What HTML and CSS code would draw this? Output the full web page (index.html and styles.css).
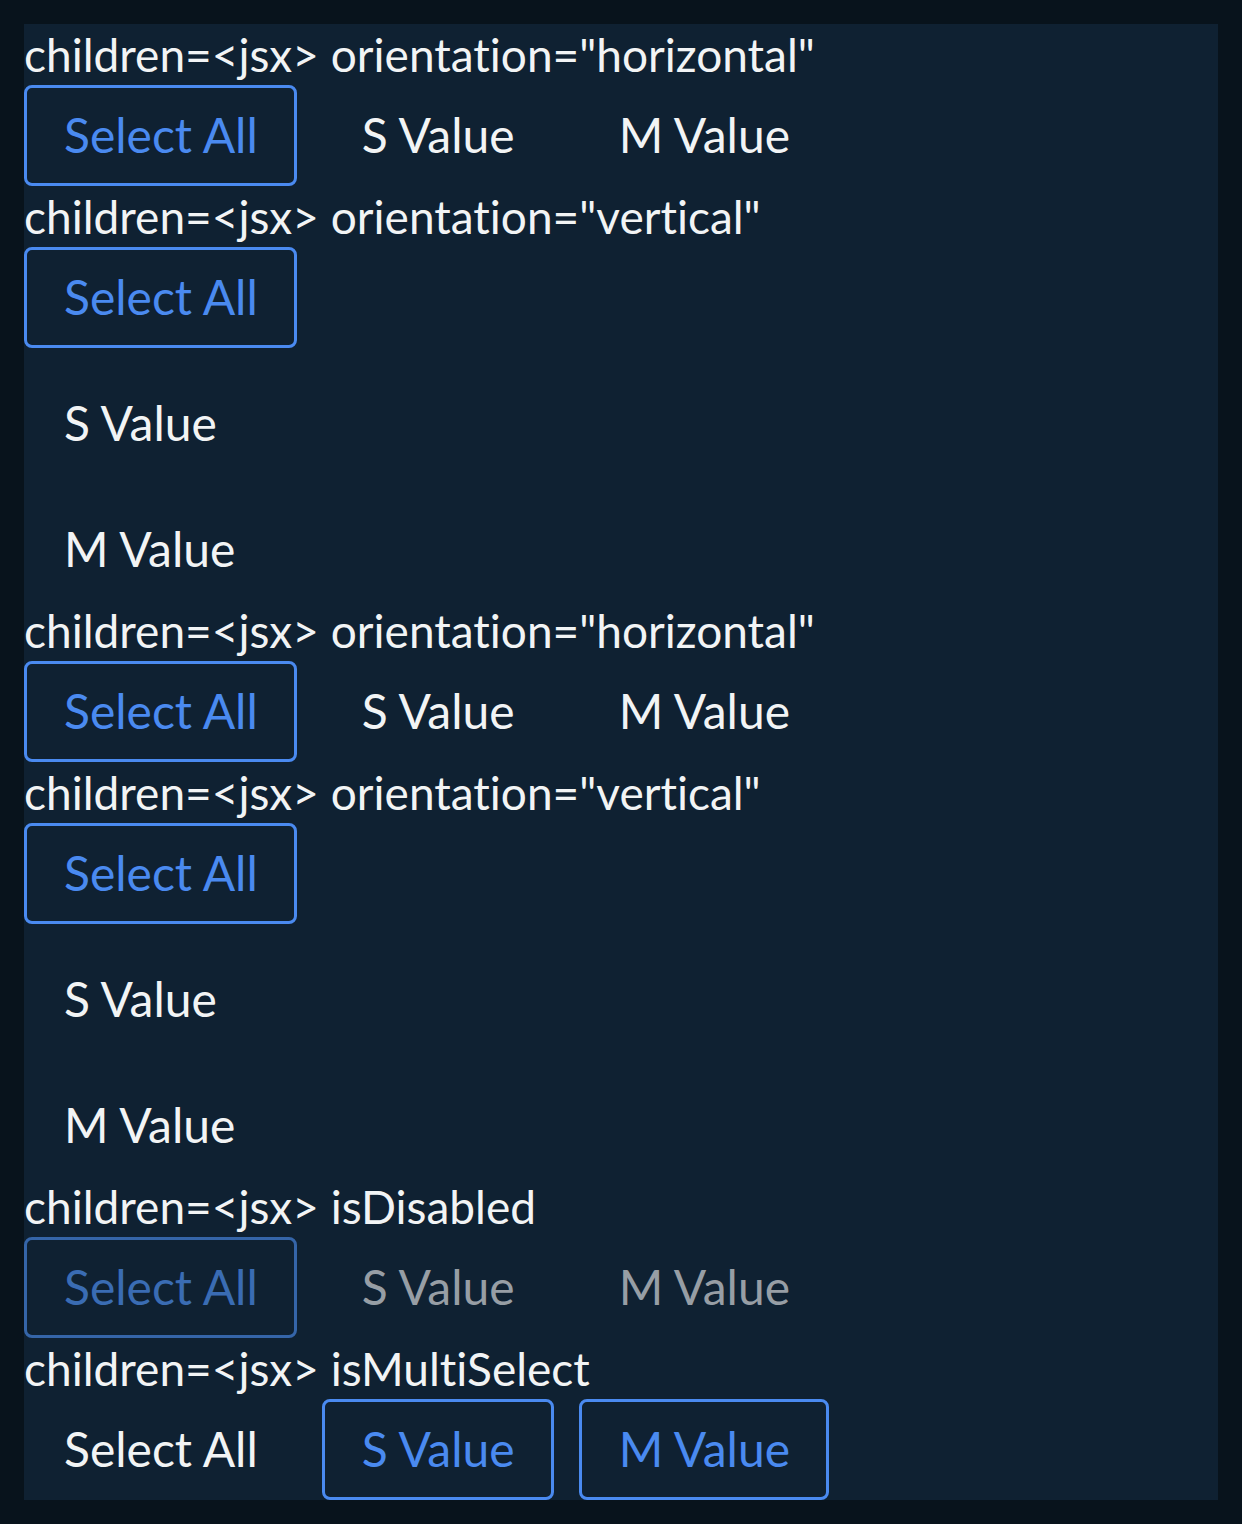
FILE: index.html
```html
<!DOCTYPE html>
<html lang="en">
<head>
<meta charset="utf-8">
<title>ToggleGroup</title>
<link rel="stylesheet" href="styles.css">
</head>
<body>
<main class="panel">
  <section class="story">
    <div class="label">children=&lt;jsx&gt; orientation="horizontal"</div>
    <div class="group row">
      <div class="item on">Select All</div>
      <div class="item">S Value</div>
      <div class="item">M Value</div>
    </div>
  </section>
  <section class="story">
    <div class="label">children=&lt;jsx&gt; orientation="vertical"</div>
    <div class="group col">
      <div class="item on">Select All</div>
      <div class="item">S Value</div>
      <div class="item">M Value</div>
    </div>
  </section>
  <section class="story">
    <div class="label">children=&lt;jsx&gt; orientation="horizontal"</div>
    <div class="group row">
      <div class="item on">Select All</div>
      <div class="item">S Value</div>
      <div class="item">M Value</div>
    </div>
  </section>
  <section class="story">
    <div class="label">children=&lt;jsx&gt; orientation="vertical"</div>
    <div class="group col">
      <div class="item on">Select All</div>
      <div class="item">S Value</div>
      <div class="item">M Value</div>
    </div>
  </section>
  <section class="story">
    <div class="label">children=&lt;jsx&gt; isDisabled</div>
    <div class="group row disabled">
      <div class="item on">Select All</div>
      <div class="item">S Value</div>
      <div class="item">M Value</div>
    </div>
  </section>
  <section class="story">
    <div class="label">children=&lt;jsx&gt; isMultiSelect</div>
    <div class="group row">
      <div class="item">Select All</div>
      <div class="item on">S Value</div>
      <div class="item on">M Value</div>
    </div>
  </section>
</main>
</body>
</html>
```
FILE: styles.css
```css
html, body {
  margin: 0;
  padding: 0;
}
body {
  background: #08131c;
  padding: 24px;
  font-family: "Lato", "Noto Sans", sans-serif;
  font-variant-ligatures: none;
  color: #f2f4f5;
}
.panel {
  background: #0f2132;
  display: flex;
  flex-direction: column;
}
.label {
  font-size: 46px;
  line-height: 61px;
  height: 61px;
  white-space: nowrap;
}
.group {
  display: flex;
  gap: 25px;
}
.row {
  flex-direction: row;
}
.col {
  flex-direction: column;
  align-items: flex-start;
}
.item {
  box-sizing: border-box;
  height: 101px;
  display: flex;
  align-items: center;
  padding: 0 36px 2px 37px;
  border: 3px solid transparent;
  border-radius: 8px;
  font-size: 48px;
  color: #f2f4f5;
  white-space: nowrap;
}
.item.on {
  border-color: #4a8af0;
  color: #4a8af0;
}
.disabled .item {
  color: #979ea5;
}
.disabled .item.on {
  border-color: #3565a8;
  color: #3a6cb3;
}
```
